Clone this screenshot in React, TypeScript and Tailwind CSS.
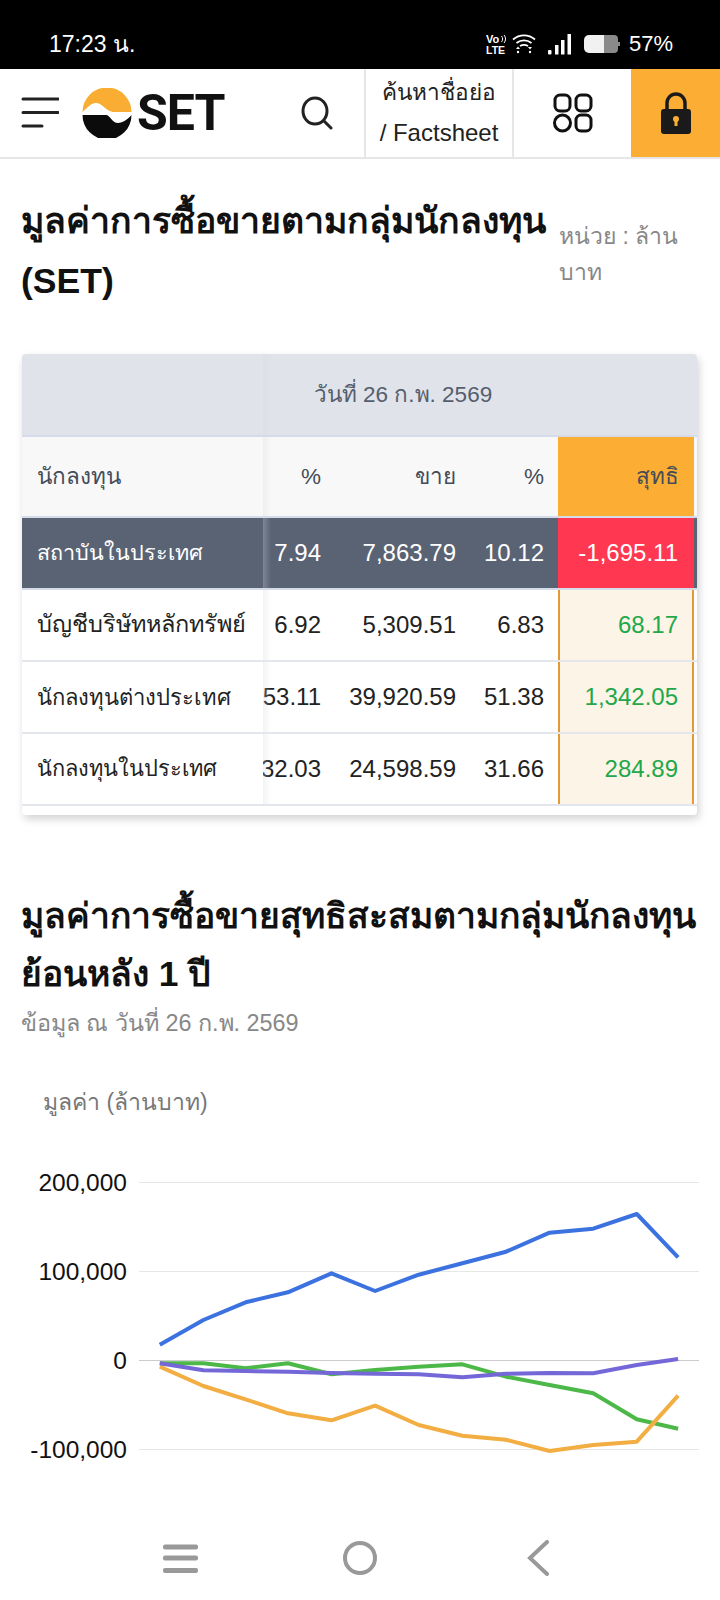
const toPts = (a: number[][]) => a.map(([x, y]) => `${(x / 2.178).toFixed(1)},${(y / 3).toFixed(1)}`).join(" ");
const blue = [[348,584],[443,510],[535,457],[627,427],[722,370],[817,423],[912,374],[1007,340],[1102,305],[1197,248],[1292,236],[1387,192],[1477,322]];
const green = [[348,640],[443,640],[535,655],[627,640],[722,673],[817,660],[912,650],[1007,643],[1102,680],[1197,705],[1292,730],[1387,808],[1477,836]];
const purple = [[348,640],[443,661],[535,663],[627,665],[722,669],[817,671],[912,673],[1007,682],[1102,671],[1197,669],[1292,670],[1387,645],[1477,627]];
const orange = [[348,650],[443,708],[535,748],[627,790],[722,811],[817,767],[912,825],[1007,857],[1102,869],[1197,903],[1292,885],[1387,875],[1477,737]];

const rows = [
  { name: "บัญชีบริษัทหลักทรัพย์", size: "text-[23.5px]", p1: "6.92", sell: "5,309.51", p2: "6.83", net: "68.17" },
  { name: "นักลงทุนต่างประเทศ", size: "text-[22px]", p1: "53.11", sell: "39,920.59", p2: "51.38", net: "1,342.05" },
  { name: "นักลงทุนในประเทศ", size: "text-[21.8px]", p1: "32.03", sell: "24,598.59", p2: "31.66", net: "284.89" },
];

const font = "font-['Liberation_Sans','Noto_Sans',sans-serif]";
const sticky = "relative z-10 w-[241px] shrink-0 h-full flex items-center pl-[15px] whitespace-nowrap after:absolute after:left-full after:inset-y-0 after:w-[8px] after:bg-linear-to-r after:from-[#d4d8e0]/30 after:to-transparent";
const c1 = "w-[58px] shrink-0 flex justify-end whitespace-nowrap";
const c2 = "w-[135px] shrink-0 flex justify-end whitespace-nowrap";
const c3 = "w-[88px] shrink-0 flex justify-end whitespace-nowrap";

export default function App() {
  return (
    <div className={`w-[720px] h-[1600px] overflow-hidden bg-white relative ${font}`}>
      <div className="h-[69px] bg-black text-white flex items-center justify-between pl-[49px] pr-[47px] pt-[19px]">
        <span className="text-[23px] leading-none">17:23 น.</span>
        <div className="flex items-center">
          <svg width="22" height="20" viewBox="0 0 22 20" fill="white">
            <text x="0" y="9" fontSize="11" fontWeight="700" fontFamily="Liberation Sans">Vo</text>
            <path d="M15.500 2c1.500 2 1.500 4 0 6M18 1c2 2.500 2 5.500 0 8" stroke="white" strokeWidth="1" fill="none" />
            <text x="0" y="19.500" fontSize="10.500" fontWeight="700" fontFamily="Liberation Sans">LTE</text>
          </svg>
          <svg width="24" height="20" viewBox="0 0 24 20" fill="none" stroke="white" strokeWidth="1.800" className="ml-[4px]">
            <path d="M1 5.500c6.500-5.500 15.500-5.500 22 0M4.500 9c4.500-3.500 10.500-3.500 15 0" />
            <path d="M8 12c2.500-1.500 5.500-1.500 8 0" />
            <path d="M4 15l2-2.500 2 2.500zM16 13h4l-2 2.500z" fill="white" stroke="none" />
            <circle cx="6" cy="18" r="1.200" fill="white" stroke="none" />
            <circle cx="18" cy="18" r="1.200" fill="white" stroke="none" />
          </svg>
          <svg width="23" height="21" viewBox="0 0 23 21" fill="white" className="ml-[12px]">
            <rect x="0" y="16" width="3.500" height="4.500" rx="1" />
            <rect x="7" y="11" width="3.500" height="9.500" />
            <rect x="13" y="6" width="3.500" height="14.500" />
            <rect x="19.500" y="0" width="3.500" height="20.500" />
          </svg>
          <svg width="36" height="18" viewBox="0 0 36 18" className="ml-[13px]">
            <path d="M20 0H30a4 4 0 0 1 4 4v3h2v4h-2v3a4 4 0 0 1-4 4H20z" fill="#8a8a8a" />
            <path d="M20 0H5a5 5 0 0 0-5 5v8a5 5 0 0 0 5 5H20z" fill="#f1f1f1" />
          </svg>
          <span className="text-[22px] leading-none ml-[9px]">57%</span>
        </div>
      </div>

      <div className="h-[90px] flex border-b-2 border-[#e6e6e6]">
        <div className="flex items-center w-[364px]">
          <svg width="38" height="32" viewBox="0 0 38 32" className="ml-[21px]" stroke="#222" strokeWidth="3" strokeLinecap="round">
            <path d="M2 2h35M2 15.500h35M2 29h19" />
          </svg>
          <svg width="50" height="50" viewBox="0 0 50 50" className="ml-[23px] shrink-0">
            <path d="M.5 24C5 20 9 15 14 15C20 15 24 23 31 24H49.500A24.500 24.500 0 0 0 .5 24Z" fill="#f9ae33" />
            <path d="M.5 27H24C28 27 30 35 36 35C41 35 46 31 49.500 27A24.500 24.500 0 0 1 .5 27Z" fill="#0b0b0b" />
          </svg>
          <span className="font-['Roboto',sans-serif] text-[50px] leading-none font-bold text-[#111] tracking-[-1px] ml-[5px]">SET</span>
          <svg width="34" height="34" viewBox="0 0 34 34" fill="none" stroke="#222" strokeWidth="3" strokeLinecap="round" className="ml-auto mr-[30px]">
            <ellipse cx="15" cy="15" rx="12" ry="13" />
            <path d="M24 25l7 7" />
          </svg>
        </div>
        <div className="w-[150px] border-x-2 border-[#e6e6e6] flex flex-col items-center justify-center text-[#222] text-[24px] leading-[40px] whitespace-nowrap">
          <span className="text-[22.6px]">ค้นหาชื่อย่อ</span>
          <span>/ Factsheet</span>
        </div>
        <div className="w-[117px] flex items-center justify-center">
          <svg width="40" height="40" viewBox="0 0 40 40" fill="none" stroke="#111" strokeWidth="3">
            <rect x="2" y="2" width="15" height="16" rx="5" />
            <rect x="23" y="2" width="15" height="16" rx="5" />
            <circle cx="9.500" cy="30" r="8" />
            <rect x="23" y="22" width="15" height="16" rx="5" />
          </svg>
        </div>
        <div className="w-[89px] bg-[#fbae33] flex items-center justify-center">
          <svg width="30" height="42" viewBox="0 0 30 42">
            <path d="M6 18V11a9 9 0 0 1 18 0v7" fill="none" stroke="#1a1a1a" strokeWidth="3.500" />
            <rect x="0" y="17" width="30" height="25" rx="3" fill="#1a1a1a" />
            <circle cx="15" cy="27" r="3" fill="#fbae33" />
            <rect x="13.500" y="27" width="3" height="7" fill="#fbae33" />
          </svg>
        </div>
      </div>

      <div className="flex items-start pl-[21px] pt-[32px]">
        <h1 className="w-[538px] text-[35.6px] leading-[60px] font-bold text-[#111] whitespace-nowrap">
          มูลค่าการซื้อขายตามกลุ่มนักลงทุน
          <br />
          (SET)
        </h1>
        <div className="pt-[27px] text-[23px] leading-[36px] text-[#888]">
          หน่วย : ล้าน
          <br />
          บาท
        </div>
      </div>

      <div className="ml-[22px] mt-[43px] w-[675px] shadow-[2px_4px_8px_rgba(0,0,0,0.18)] rounded-[4px] overflow-hidden">
        <div className="h-[83px] bg-[#e0e3ea] flex border-b-2 border-[#d5dbe8]">
          <div className={sticky} />
          <div className="flex-1 flex items-center justify-center pr-[154px] text-[22.5px] text-[#555e6d] whitespace-nowrap">วันที่ 26 ก.พ. 2569</div>
        </div>
        <div className="h-[81px] flex items-center text-[22.5px] text-[#444c59] bg-[#f8f8f8] border-b-2 border-[#d5dbe8]">
          <div className={sticky}>นักลงทุน</div>
          <div className={c1}>%</div>
          <div className={c2}>ขาย</div>
          <div className={c3}>%</div>
          <div className="ml-[14px] w-[136px] h-full bg-[#fbae33] flex items-center justify-end pr-[15px]">สุทธิ</div>
        </div>
        <div className="h-[72px] flex items-center text-[24px] text-white bg-[#5a6374] border-b-2 border-[#d5dbe8]">
          <div className={`${sticky} text-[21.6px]`}>สถาบันในประเทศ</div>
          <div className={c1}>7.94</div>
          <div className={c2}>7,863.79</div>
          <div className={c3}>10.12</div>
          <div className="ml-[14px] w-[136px] h-full bg-[#ff3750] flex items-center justify-end pr-[16px]">-1,695.11</div>
        </div>
        {rows.map((r) => (
          <div key={r.name} className="h-[72px] flex items-center text-[24px] text-[#222] bg-white border-b-2 border-[#e3e6ec]">
            <div className={`${sticky} bg-white ${r.size}`}>{r.name}</div>
            <div className={c1}>{r.p1}</div>
            <div className={c2}>{r.sell}</div>
            <div className={c3}>{r.p2}</div>
            <div className="ml-[14px] w-[136px] h-full bg-[#fdf4e8] border-x-2 border-[#e39a36] flex items-center justify-end pr-[14px] text-[#22a84a]">{r.net}</div>
          </div>
        ))}
        <div className="h-[9px] bg-white" />
      </div>

      <div className="pl-[21px] pt-[72px]">
        <h2 className="text-[35.4px] leading-[58px] font-bold text-[#111] whitespace-nowrap">มูลค่าการซื้อขายสุทธิสะสมตามกลุ่มนักลงทุน</h2>
        <h2 className="text-[35.4px] leading-[58px] font-bold text-[#111]">ย้อนหลัง 1 ปี</h2>
        <p className="mt-[2px] text-[23.4px] leading-[36px] text-[#888]">ข้อมูล ณ วันที่ 26 ก.พ. 2569</p>
      </div>

      <div className="pl-[43px] pt-[43px] text-[23px] leading-[36px] text-[#777]">มูลค่า (ล้านบาท)</div>

      <svg width="720" height="320" viewBox="0 0 720 320" className="block mt-[30px]">
        <g stroke="#e6e6e6" strokeWidth="1">
          <line x1="139" x2="699" y1="32.500" y2="32.500" />
          <line x1="139" x2="699" y1="121.500" y2="121.500" />
          <line x1="139" x2="699" y1="210.500" y2="210.500" stroke="#ccc" />
          <line x1="139" x2="699" y1="299.500" y2="299.500" />
        </g>
        <g fontSize="24.500" fill="#111" textAnchor="end" fontFamily="Liberation Sans">
          <text x="127" y="41">200,000</text>
          <text x="127" y="130">100,000</text>
          <text x="127" y="219">0</text>
          <text x="127" y="308">-100,000</text>
        </g>
        <g fill="none" strokeWidth="4" strokeLinejoin="round">
          <polyline points={toPts(blue)} stroke="#3b72e0" />
          <polyline points={toPts(green)} stroke="#4cb848" />
          <polyline points={toPts(orange)} stroke="#f2ae42" />
          <polyline points={toPts(purple)} stroke="#7468d8" />
        </g>
      </svg>

      <div className="absolute left-0 right-0 bottom-0 h-[80px] bg-white">
        <svg width="36" height="32" viewBox="0 0 36 32" className="absolute left-[163px] top-[22px]" fill="#999">
          <rect x="0" y="2.500" width="35" height="5" rx="2" />
          <rect x="0" y="13.500" width="35" height="5" rx="2" />
          <rect x="0" y="26" width="35" height="5" rx="2" />
        </svg>
        <svg width="36" height="36" viewBox="0 0 36 36" className="absolute left-[342px] top-[20px]" fill="none" stroke="#999" strokeWidth="4">
          <circle cx="18" cy="18" r="15" />
        </svg>
        <svg width="24" height="36" viewBox="0 0 24 36" className="absolute left-[527px] top-[20px]" fill="none" stroke="#999" strokeWidth="4" strokeLinecap="round">
          <path d="M20 2L3 18l17 16" />
        </svg>
      </div>
    </div>
  );
}
